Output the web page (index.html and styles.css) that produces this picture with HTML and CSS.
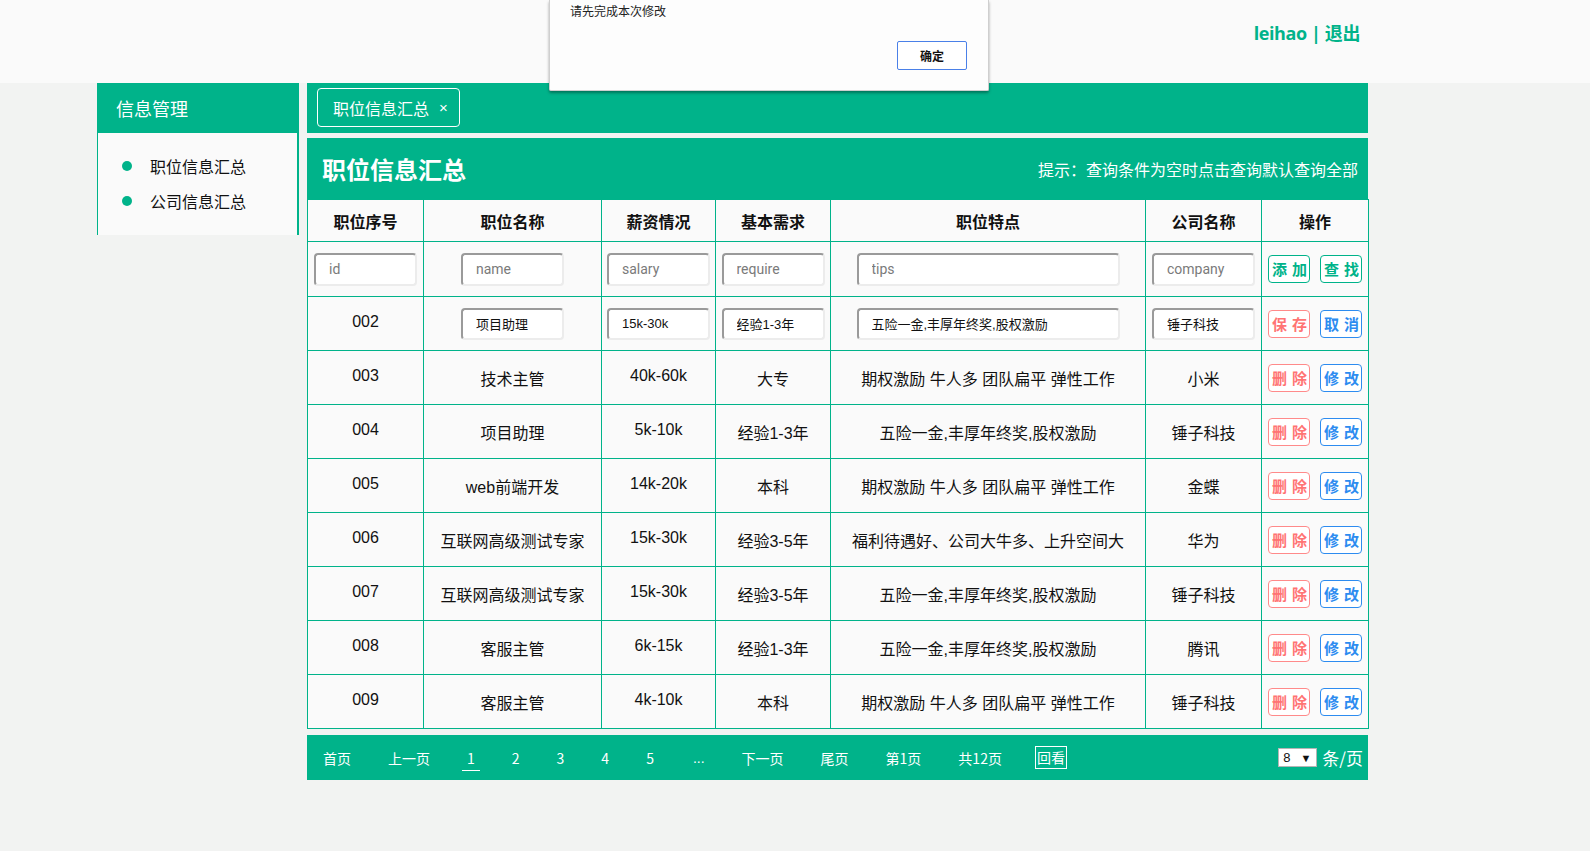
FILE: index.html
```html
<!DOCTYPE html>
<html lang="zh-CN">
<head>
<meta charset="utf-8">
<title>职位信息汇总</title>
<link rel="stylesheet" href="styles.css">
</head>
<body>
<header class="topbar">
  <div class="wrap topbar-inner">
    <div class="user">leihao | 退出</div>
  </div>
</header>

<div class="dialog">
  <p class="dialog-msg">请先完成本次修改</p>
  <div class="dialog-actions"><button class="dialog-ok">确定</button></div>
</div>

<div class="wrap main">
  <aside class="sidebar">
    <div class="side-head">信息管理</div>
    <ul class="side-list">
      <li>职位信息汇总</li>
      <li>公司信息汇总</li>
    </ul>
  </aside>

  <section class="content">
    <div class="tabbar">
      <div class="tab">职位信息汇总<span class="tab-close">×</span></div>
    </div>
    <div class="titlebar">
      <h1 class="title">职位信息汇总</h1>
      <div class="hint">提示：查询条件为空时点击查询默认查询全部</div>
    </div>

    <table class="grid">
      <colgroup>
        <col class="c1"><col class="c2"><col class="c3"><col class="c4"><col class="c5"><col class="c6"><col class="c7">
      </colgroup>
      <thead>
        <tr class="head-row">
          <th>职位序号</th><th>职位名称</th><th>薪资情况</th><th>基本需求</th><th>职位特点</th><th>公司名称</th><th>操作</th>
        </tr>
      </thead>
      <tbody>
        <tr class="input-row">
          <td><input class="field" placeholder="id"></td>
          <td><input class="field" placeholder="name"></td>
          <td><input class="field" placeholder="salary"></td>
          <td><input class="field" placeholder="require"></td>
          <td><input class="field wide" placeholder="tips"></td>
          <td><input class="field" placeholder="company"></td>
          <td class="ops"><div class="ops-box"><button class="btn green"><span>添</span><span>加</span></button><button class="btn green"><span>查</span><span>找</span></button></div></td>
        </tr>
        <tr class="data-row">
          <td class="num">002</td>
          <td><input class="field filled" value="项目助理"></td>
          <td><input class="field filled" value="15k-30k"></td>
          <td><input class="field filled" value="经验1-3年"></td>
          <td><input class="field wide filled" value="五险一金,丰厚年终奖,股权激励"></td>
          <td><input class="field filled" value="锤子科技"></td>
          <td class="ops"><div class="ops-box"><button class="btn red"><span>保</span><span>存</span></button><button class="btn blue"><span>取</span><span>消</span></button></div></td>
        </tr>
        <tr class="data-row">
          <td class="num">003</td><td>技术主管</td><td class="num">40k-60k</td><td>大专</td><td>期权激励 牛人多 团队扁平 弹性工作</td><td>小米</td>
          <td class="ops"><div class="ops-box"><button class="btn red"><span>删</span><span>除</span></button><button class="btn blue"><span>修</span><span>改</span></button></div></td>
        </tr>
        <tr class="data-row">
          <td class="num">004</td><td>项目助理</td><td class="num">5k-10k</td><td>经验1-3年</td><td>五险一金,丰厚年终奖,股权激励</td><td>锤子科技</td>
          <td class="ops"><div class="ops-box"><button class="btn red"><span>删</span><span>除</span></button><button class="btn blue"><span>修</span><span>改</span></button></div></td>
        </tr>
        <tr class="data-row">
          <td class="num">005</td><td>web前端开发</td><td class="num">14k-20k</td><td>本科</td><td>期权激励 牛人多 团队扁平 弹性工作</td><td>金蝶</td>
          <td class="ops"><div class="ops-box"><button class="btn red"><span>删</span><span>除</span></button><button class="btn blue"><span>修</span><span>改</span></button></div></td>
        </tr>
        <tr class="data-row">
          <td class="num">006</td><td>互联网高级测试专家</td><td class="num">15k-30k</td><td>经验3-5年</td><td>福利待遇好、公司大牛多、上升空间大</td><td>华为</td>
          <td class="ops"><div class="ops-box"><button class="btn red"><span>删</span><span>除</span></button><button class="btn blue"><span>修</span><span>改</span></button></div></td>
        </tr>
        <tr class="data-row">
          <td class="num">007</td><td>互联网高级测试专家</td><td class="num">15k-30k</td><td>经验3-5年</td><td>五险一金,丰厚年终奖,股权激励</td><td>锤子科技</td>
          <td class="ops"><div class="ops-box"><button class="btn red"><span>删</span><span>除</span></button><button class="btn blue"><span>修</span><span>改</span></button></div></td>
        </tr>
        <tr class="data-row">
          <td class="num">008</td><td>客服主管</td><td class="num">6k-15k</td><td>经验1-3年</td><td>五险一金,丰厚年终奖,股权激励</td><td>腾讯</td>
          <td class="ops"><div class="ops-box"><button class="btn red"><span>删</span><span>除</span></button><button class="btn blue"><span>修</span><span>改</span></button></div></td>
        </tr>
        <tr class="data-row">
          <td class="num">009</td><td>客服主管</td><td class="num">4k-10k</td><td>本科</td><td>期权激励 牛人多 团队扁平 弹性工作</td><td>锤子科技</td>
          <td class="ops"><div class="ops-box"><button class="btn red"><span>删</span><span>除</span></button><button class="btn blue"><span>修</span><span>改</span></button></div></td>
        </tr>
      </tbody>
    </table>

    <nav class="pager">
      <span>首页</span>
      <span>上一页</span>
      <span class="current">1</span>
      <span>2</span>
      <span>3</span>
      <span>4</span>
      <span>5</span>
      <span class="dots">...</span>
      <span>下一页</span>
      <span>尾页</span>
      <span>第1页</span>
      <span>共12页</span>
      <span class="boxed">回看</span>
      <span class="pager-right">
        <span class="size-select"><span>8</span><span class="arrow">▼</span></span>
        <span class="per">条/页</span>
      </span>
    </nav>
  </section>
</div>
</body>
</html>
```

FILE: styles.css
```css
* { box-sizing: border-box; }

html, body {
  margin: 0;
  padding: 0;
}

body {
  background: #f2f3f2;
  font-family: "Liberation Sans", "Noto Sans CJK SC", sans-serif;
  color: #111;
}

.wrap {
  margin-left: 97px;
  width: 1271px;
}

.topbar {
  height: 83px;
  background: #fafafa;
}

.topbar-inner {
  height: 83px;
  display: flex;
  justify-content: flex-end;
  align-items: center;
  padding-right: 8px;
  padding-bottom: 17px;
}

.user {
  font-family: "Open Sans", "Noto Sans CJK SC", sans-serif;
  font-weight: bold;
  font-size: 18px;
  letter-spacing: -0.4px;
  color: #00b38a;
  line-height: 24px;
}

/* alert dialog overlay */
.dialog {
  position: absolute;
  left: 549px;
  top: 0;
  width: 440px;
  height: 91px;
  background: #fdfdfd;
  border: 1px solid #cfcfcf;
  border-top: none;
  box-shadow: 0 2px 3px rgba(0, 0, 0, 0.35);
  border-radius: 0 0 2px 2px;
  padding: 3px 21px 0 20px;
}

.dialog-msg {
  margin: 0;
  font-size: 12px;
  line-height: 16px;
  color: #222;
  font-family: "Noto Sans CJK SC", sans-serif;
}

.dialog-actions {
  display: flex;
  justify-content: flex-end;
  margin-top: 22px;
}

.dialog-ok {
  width: 70px;
  height: 29px;
  background: #fff;
  border: 1px solid #4a80e8;
  border-radius: 2px;
  font-family: "Noto Sans CJK SC", sans-serif;
  font-weight: bold;
  font-size: 12px;
  color: #111;
  padding: 0;
}

/* main layout */
.main {
  display: flex;
  gap: 8px;
  align-items: flex-start;
}

.sidebar {
  width: 202px;
  flex: none;
}

.side-head {
  height: 50px;
  background: #00b38a;
  color: #fff;
  font-family: "Noto Sans CJK SC", sans-serif;
  font-size: 18px;
  line-height: 50px;
  padding-left: 19px;
}

.side-list {
  margin: 0;
  list-style: none;
  height: 102px;
  background: #fafafa;
  border-left: 1px solid #00b38a;
  border-right: 2px solid #00b38a;
  padding: 16px 0 0 24px;
}

.side-list li {
  display: flex;
  align-items: center;
  height: 34.5px;
  font-family: "Noto Sans CJK SC", sans-serif;
  font-size: 16px;
  color: #111;
}

.side-list li::before {
  content: "";
  width: 10px;
  height: 10px;
  border-radius: 50%;
  background: #00b38a;
  margin-right: 18px;
  flex: none;
}

.content {
  width: 1061px;
  flex: none;
}

.tabbar {
  height: 50px;
  background: #00b38a;
  padding: 5px 10px;
}

.tab {
  display: inline-flex;
  align-items: center;
  height: 39px;
  border: 1px solid #fff;
  border-radius: 4px;
  padding: 0 11px 0 15px;
  color: #fff;
  font-family: "Noto Sans CJK SC", sans-serif;
  font-size: 16px;
}

.tab-close {
  margin-left: 10px;
  font-size: 15px;
  font-family: "Liberation Sans", sans-serif;
}

.titlebar {
  margin-top: 5px;
  height: 61px;
  background: #00b38a;
  color: #fff;
  display: flex;
  justify-content: space-between;
  align-items: center;
  padding: 0 10px 0 15px;
}

.title {
  margin: 0;
  font-family: "Noto Sans CJK SC", sans-serif;
  font-size: 24px;
  font-weight: bold;
  line-height: 30px;
}

.hint {
  font-family: "Noto Sans CJK SC", sans-serif;
  font-size: 16px;
  line-height: 22px;
}

/* table */
.grid {
  width: 1061px;
  border-collapse: collapse;
  table-layout: fixed;
  background: #fafafa;
  font-size: 16px;
}

.c1 { width: 116px; }
.c2 { width: 178px; }
.c3 { width: 114px; }
.c4 { width: 115px; }
.c5 { width: 315px; }
.c6 { width: 116px; }
.c7 { width: 107px; }

.grid th,
.grid td {
  border: 1px solid #00b38a;
  text-align: center;
  padding: 0;
  font-family: "Liberation Sans", "Noto Sans CJK SC", sans-serif;
  color: #111;
}

.grid th {
  font-family: "Noto Sans CJK SC", sans-serif;
  font-weight: bold;
  font-size: 16px;
}

.head-row { height: 42px; }
.input-row { height: 55px; }
.data-row { height: 54px; }

.grid td.num {
  padding-bottom: 4px;
}

.field {
  width: 103px;
  height: 33px;
  border: 2px solid;
  border-color: #9a9a9a #ececec #ececec #9a9a9a;
  border-radius: 4px;
  background: #fff;
  padding: 0 12px 0 13px;
  font-family: "Roboto", "Noto Sans CJK SC", sans-serif;
  font-size: 14px;
  color: #111;
  outline: none;
  vertical-align: middle;
}

.field::placeholder {
  color: #7a7a7a;
}

.field.filled {
  font-family: "Liberation Sans", "Noto Sans CJK SC", sans-serif;
  font-size: 13px;
  height: 32px;
}

.field.wide {
  width: 263px;
}

.grid td.ops {
  padding-left: 6px;
}

.ops-box {
  display: flex;
  gap: 10px;
  align-items: center;
}

.btn {
  width: 42px;
  height: 28px;
  margin: 0;
  background: #fff;
  border: 1px solid;
  border-radius: 4px;
  padding: 0 0 0 3px;
  display: flex;
  align-items: center;
  gap: 5px;
  font-family: "Noto Sans CJK SC", sans-serif;
  font-size: 15px;
  font-weight: bold;
  line-height: 20px;
}

.btn.green { border-color: #00b38a; color: #00b38a; }
.btn.red { border-color: #ff8a8a; color: #ff7474; }
.btn.blue { border-color: #2d8cf0; color: #2d8cf0; }

/* pager */
.pager {
  margin-top: 6px;
  height: 45px;
  background: #00b38a;
  display: flex;
  align-items: center;
  gap: 37px;
  padding: 0 5px 0 16px;
  color: #fff;
  font-family: "Noto Sans CJK SC", sans-serif;
  font-size: 14px;
  line-height: 20px;
}

.pager .dots {
  font-family: "Liberation Sans", sans-serif;
  padding-left: 2px;
}

.pager .current {
  padding: 0 5px 2px;
  margin: 0 -5px;
  border-bottom: 1px solid #fff;
  margin-top: 3px;
}

.pager .boxed {
  border: 1px solid #fff;
  padding: 1px 1px;
  margin-left: -4px;
  height: 23px;
  line-height: 19px;
}

.pager-right {
  margin-left: auto;
  display: flex;
  align-items: center;
  gap: 5px;
}

.size-select {
  width: 39px;
  height: 19px;
  background: #fff;
  border: 1px solid #b5b5b5;
  display: flex;
  justify-content: space-between;
  align-items: center;
  padding: 0 5px 0 4px;
  color: #111;
  font-family: "Liberation Sans", sans-serif;
  font-size: 13px;
}

.size-select .arrow {
  font-size: 11px;
}

.per {
  font-size: 17px;
  line-height: 22px;
}
```
